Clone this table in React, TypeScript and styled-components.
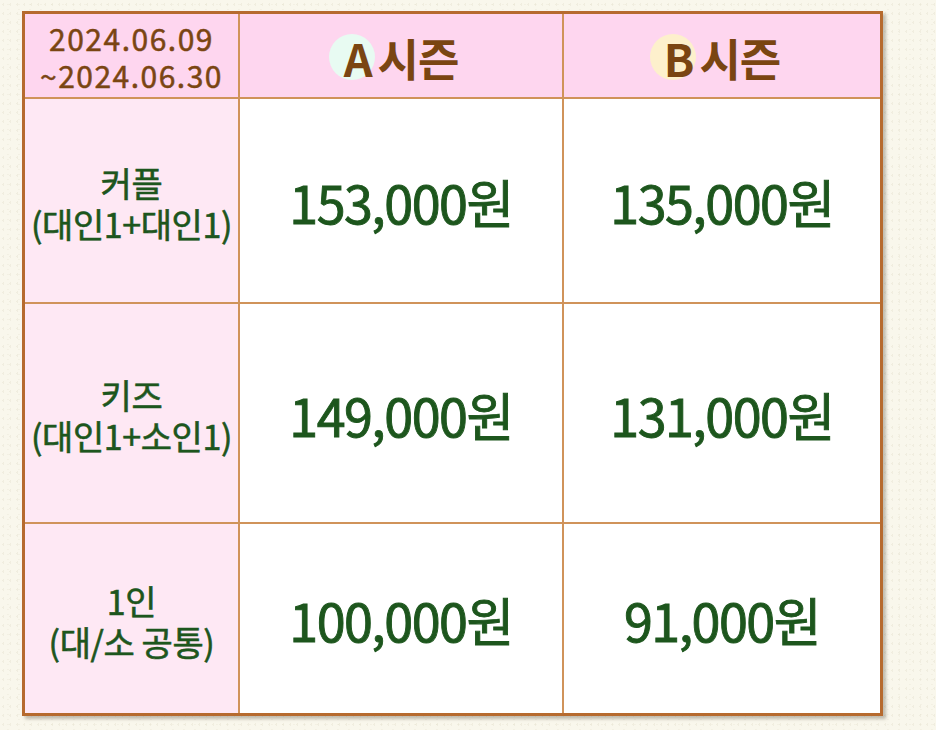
import React from 'react';
import styled, { createGlobalStyle } from 'styled-components';

const GlobalStyle = createGlobalStyle`
  html, body {
    margin: 0;
    padding: 0;
    background: #f9f7ec;
  }
  body {
    font-family: "Noto Sans CJK KR", "Noto Sans", sans-serif;
  }
`;

const Page = styled.div`
  width: 936px;
  height: 730px;
  padding: 11px 0 0 22px;
  box-sizing: border-box;
  background-color: #f9f7ec;
  background-image:
    radial-gradient(rgba(200, 195, 170, 0.18) 1px, transparent 1px),
    radial-gradient(rgba(200, 195, 170, 0.12) 1px, transparent 1px);
  background-size: 7px 9px, 11px 5px;
  background-position: 0 0, 3px 2px;
`;

const PriceTable = styled.div`
  display: grid;
  grid-template-columns: 213px 322px 316px;
  grid-template-rows: 83px 203px 218px 189px;
  gap: 2px;
  width: 861px;
  box-sizing: border-box;
  border: 3px solid #b66a2e;
  background: #d0935a;
  box-shadow: 3px 3px 3px rgba(90, 80, 60, 0.35);
`;

type CellKind = 'head' | 'label' | 'price';

const cellBg: Record<CellKind, string> = {
  head: '#fed6ef',
  label: '#fee8f4',
  price: '#ffffff',
};

const Cell = styled.div<{ $kind: CellKind }>`
  display: flex;
  align-items: center;
  justify-content: center;
  text-align: center;
  background: ${(p) => cellBg[p.$kind]};
  color: ${(p) => (p.$kind === 'head' ? '#7a4512' : '#1d561d')};
`;

const DateText = styled.div`
  font-size: 30px;
  font-weight: 400;
  line-height: 37px;
  letter-spacing: 1.5px;
  margin-top: 2px;
  -webkit-text-stroke: 0.5px currentColor;
`;

const SeasonTitle = styled.div`
  display: flex;
  align-items: center;
  font-size: 45px;
  font-weight: 700;
  letter-spacing: -1px;
  margin-top: 4px;
`;

const Badge = styled.span<{ $tone: string }>`
  position: relative;
  z-index: 0;
  margin-right: 6px;

  &::before {
    content: '';
    position: absolute;
    z-index: -1;
    left: 50%;
    top: 50%;
    width: 46px;
    height: 46px;
    margin: -24px 0 0 -29px;
    border-radius: 50%;
    background: ${(p) => p.$tone};
  }
`;

const RowLabel = styled.div`
  font-size: 34px;
  font-weight: 400;
  line-height: 41px;
  letter-spacing: -0.4px;
  margin-top: 4px;
  -webkit-text-stroke: 0.6px currentColor;
`;

const Price = styled.div`
  font-size: 52px;
  font-weight: 400;
  letter-spacing: -1.5px;
  margin-top: 2px;
  -webkit-text-stroke: 0.9px currentColor;
`;

const rows = [
  { name: '커플', sub: '(대인1+대인1)', a: '153,000원', b: '135,000원' },
  { name: '키즈', sub: '(대인1+소인1)', a: '149,000원', b: '131,000원' },
  { name: '1인', sub: '(대/소 공통)', a: '100,000원', b: '91,000원' },
];

const App = () => {
  return (
    <>
      <GlobalStyle />
      <Page>
        <PriceTable>
          <Cell $kind="head">
            <DateText>
              2024.06.09
              <br />
              ~2024.06.30
            </DateText>
          </Cell>
          <Cell $kind="head">
            <SeasonTitle>
              <Badge $tone="#e8fbf2">A</Badge>시즌
            </SeasonTitle>
          </Cell>
          <Cell $kind="head">
            <SeasonTitle>
              <Badge $tone="#fdf0cc">B</Badge>시즌
            </SeasonTitle>
          </Cell>

          {rows.map((r) => (
            <React.Fragment key={r.name}>
              <Cell $kind="label">
                <RowLabel>
                  {r.name}
                  <br />
                  {r.sub}
                </RowLabel>
              </Cell>
              <Cell $kind="price">
                <Price>{r.a}</Price>
              </Cell>
              <Cell $kind="price">
                <Price>{r.b}</Price>
              </Cell>
            </React.Fragment>
          ))}
        </PriceTable>
      </Page>
    </>
  );
};

export default App;
